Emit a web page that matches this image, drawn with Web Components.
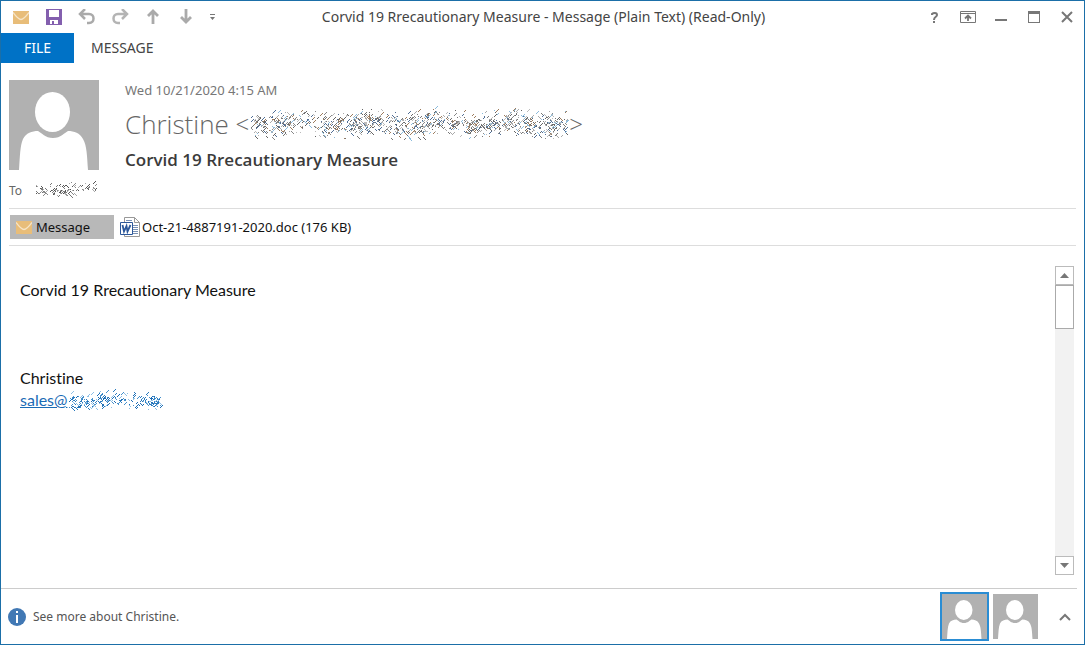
<!DOCTYPE html>
<html lang="en">
<head>
<meta charset="utf-8">
<title>Corvid 19 Rrecautionary Measure - Message</title>
<style>
html, body { margin: 0; background: #fff; }
body { font-family: "Noto Sans", "Open Sans", sans-serif; color: #444; }
</style>
</head>
<body>
<mail-window></mail-window>

<template id="t-window">
<style>
:host { display: flex; flex-direction: column; box-sizing: border-box; min-height: 100vh; border: 1px solid #1b6fa8; background: #fff; }
message-body { flex: 1; }
</style>
<title-bar>Corvid 19 Rrecautionary Measure - Message (Plain Text) (Read-Only)</title-bar>
<ribbon-tabs></ribbon-tabs>
<message-header></message-header>
<attachment-bar></attachment-bar>
<message-body></message-body>
<people-pane></people-pane>
</template>

<template id="t-title">
<style>
:host { display: flex; align-items: center; justify-content: space-between; height: 32px; }
.group { display: flex; flex: 1; align-items: center; }
.quick { padding-left: 3px; }
.controls { justify-content: flex-end; padding-right: 1px; }
button { display: flex; align-items: center; justify-content: center; width: 33px; height: 32px; padding: 0; border: 0; background: none; }
.more { width: 20px; }
.title { font-size: 14px; line-height: 20px; white-space: nowrap; }
svg { display: block; }
</style>
<div class="group quick">
<button aria-label="Message"><envelope-icon></envelope-icon></button>
<button aria-label="Save"><svg width="16" height="16" viewBox="0 0 16 16"><path fill="#835fae" d="M0 0h16v16H0z"/><path fill="#fff" d="M3 1h10v7H3zM4 11h8v4H8v-3H6v3H4z"/></svg></button>
<button aria-label="Undo"><svg width="18" height="16" viewBox="0 0 18 16" fill="none" stroke="#aaa" stroke-width="2.5"><path d="M2 5h9c6 0 6 9 0 9H9M7 0 2 5l5 5"/></svg></button>
<button aria-label="Redo"><svg width="18" height="16" viewBox="0 0 18 16" fill="none" stroke="#b4b4b4" stroke-width="2.5"><path d="M16 5H7c-6 0-6 9 0 9h2M11 0l5 5-5 5"/></svg></button>
<button aria-label="Previous item"><svg width="14" height="16" viewBox="0 0 14 16" fill="none" stroke="#aaa" stroke-width="2.8"><path d="M7 15V2M2 7l5-5 5 5"/></svg></button>
<button aria-label="Next item"><svg width="14" height="16" viewBox="0 0 14 16" fill="none" stroke="#aaa" stroke-width="2.8"><path d="M7 0v13M2 8l5 5 5-5"/></svg></button>
<button class="more" aria-label="Customize toolbar"><svg width="5" height="6" viewBox="0 0 5 6" fill="#777"><path d="M0 0h5v1H0zM0 3h5L2.500 6z"/></svg></button>
</div>
<span class="title"><slot></slot></span>
<div class="group controls">
<button aria-label="Help"><svg width="8" height="11" viewBox="0 0 8 11" fill="none" stroke="#777" stroke-width="2"><path d="M1 3V2c1-1 5-2 5 1 0 2-3 1.500-3 5M3 9v2"/></svg></button>
<button aria-label="Ribbon display options"><svg width="16" height="12" viewBox="0 0 16 12" fill="none" stroke="#777"><path d="M.5.5h15v11H.5zM0 2.500h16"/><path d="M8 10V5M5 7.500l3-3 3 3" stroke-width="1.800"/></svg></button>
<button aria-label="Minimize"><svg width="12" height="12" viewBox="0 0 12 12"><path fill="#777" d="M0 8h12v2H0z"/></svg></button>
<button aria-label="Maximize"><svg width="12" height="12" viewBox="0 0 12 12"><path fill="#777" fill-rule="evenodd" d="M0 0h12v12H0zM1 3v8h10V3z"/></svg></button>
<button aria-label="Close"><svg width="12" height="12" viewBox="0 0 12 12"><path d="m1 1 10 10M11 1 1 11" stroke="#777" stroke-width="2"/></svg></button>
</div>
</template>

<template id="t-tabs">
<style>
:host { display: flex; height: 30px; font-size: 14px; line-height: 30px; }
button { font: inherit; padding: 0 17px; border: 0; background: none; color: #444; }
.file { width: 73px; background: #0072c6; color: #fff; }
</style>
<button class="file">FILE</button><button>MESSAGE</button>
</template>

<template id="t-header">
<style>
:host { display: block; margin: 0 8px; padding: 17px 0 8px; border-bottom: 1px solid #ddd; }
.top { display: flex; gap: 26px; }
.date { font-size: 13px; line-height: 20px; color: #777; }
.from { display: flex; align-items: center; font-family: "Open Sans", sans-serif; font-size: 26px; line-height: 40px; height: 48px; font-weight: 300; color: #666; white-space: pre; }
.from span { font-size: 24px; }
h1 { margin: 0; font-family: "Open Sans", sans-serif; font-size: 17px; line-height: 24px; font-weight: 600; color: #3b3b3b; }
.to { display: flex; align-items: center; gap: 12px; height: 20px; margin-top: 8px; font-size: 12px; color: #666; }
</style>
<div class="top">
<person-photo size="90"></person-photo>
<div>
<div class="date">Wed 10/21/2020 4:15 AM</div>
<div class="from">Christine <span>&lt;</span><ink-scribble width="320" height="36" seed="7" tone="mixed"></ink-scribble><span>&gt;</span></div>
<h1>Corvid 19 Rrecautionary Measure</h1>
</div>
</div>
<div class="to">To <ink-scribble width="64" height="18" seed="3" tone="grey"></ink-scribble></div>
</template>

<template id="t-attach">
<style>
:host { display: flex; align-items: center; gap: 6px; height: 36px; margin: 0 8px; padding-left: 1px; border-bottom: 1px solid #ddd; }
button { display: flex; align-items: center; gap: 4px; height: 24px; padding: 0; border: 0; background: none; font: inherit; font-size: 13px; color: #111; }
.selected { width: 104px; padding-left: 6px; background: #b8b8b8; }
.file { gap: 2px; }
</style>
<button class="selected"><envelope-icon></envelope-icon>Message</button>
<button class="file"><svg width="20" height="20" viewBox="0 0 20 20"><path d="M4.500.5h10l5 5v14h-15z" fill="#fff" stroke="#999"/><path d="M14.500.5v5h5" fill="none" stroke="#999"/><path d="M13 8.500h5M13 10.500h5M13 12.500h5M13 14.500h5M13 16.500h5M6 3.500h6" stroke="#7891b5"/><path d="M.5 5.500h12v12H.5z" fill="#fff" stroke="#2b579a"/><path d="m2.500 8 1.500 6.500L6.500 9l1 5.500L10.500 8" fill="none" stroke="#2b579a" stroke-width="1.800"/></svg>Oct-21-4887191-2020.doc (176 KB)</button>
</template>

<template id="t-body">
<style>
:host { display: flex; justify-content: space-between; padding: 20px 10px 13px 19px; font-family: Lato, "Open Sans", sans-serif; font-variant-ligatures: none; font-size: 16px; line-height: 22px; color: #111; }
article { padding-top: 13px; }
p { margin: 0; min-height: 22px; }
a { color: #1a6bb5; }
.mail { display: flex; }
</style>
<article>
<p>Corvid 19 Rrecautionary Measure</p><p></p><p></p><p></p>
<p>Christine</p>
<p class="mail"><a href="mailto:sales">sales@</a><ink-scribble width="96" height="24" seed="11" tone="blue"></ink-scribble></p>
</article>
<scroll-track></scroll-track>
</template>

<template id="t-scroll">
<style>
:host { display: flex; flex-direction: column; width: 19px; background: #f2f2f2; }
button { display: flex; align-items: center; justify-content: center; box-sizing: border-box; width: 19px; height: 19px; padding: 0; border: 1px solid #bbb; background: #fff; }
.thumb { box-sizing: border-box; height: 44px; border: 1px solid #aaa; background: #fff; }
.space { flex: 1; }
</style>
<button aria-label="Scroll up"><svg width="9" height="5" viewBox="0 0 9 5"><path fill="#777" d="M0 5 4.500 0 9 5z"/></svg></button>
<div class="thumb"></div>
<div class="space"></div>
<button aria-label="Scroll down"><svg width="9" height="5" viewBox="0 0 9 5"><path fill="#777" d="m0 0 4.500 5L9 0z"/></svg></button>
</template>

<template id="t-people">
<style>
:host { display: flex; align-items: center; height: 55px; margin-right: 7px; padding-left: 7px; border-top: 1px solid #ccc; font-size: 12px; color: #555; }
.info { flex: none; margin-right: 7px; }
.text { flex: 1; }
.person { display: block; padding: 0; border: 0; background: none; margin-left: 4px; }
.active { border: 2px solid #2a8dd4; }
.collapse { display: flex; justify-content: center; width: 24px; margin-left: 15px; padding: 0; border: 0; background: none; }
</style>
<svg class="info" width="18" height="18" viewBox="0 0 18 18"><circle cx="9" cy="9" r="9" fill="#4178b4"/><path fill="#fff" d="M8 3h2v2H8zM8 7h2v8H8z"/></svg>
<span class="text">See more about Christine.</span>
<button class="person active" aria-label="Christine"><person-photo size="45"></person-photo></button>
<button class="person" aria-label="Recipient"><person-photo size="45"></person-photo></button>
<button class="collapse" aria-label="Expand"><svg width="12" height="8" viewBox="0 0 12 8"><path d="m1 7 5-5 5 5" fill="none" stroke="#777" stroke-width="2"/></svg></button>
</template>

<template id="t-envelope">
<style>:host { display: block; } svg { display: block; }</style>
<svg width="16" height="13" viewBox="0 0 16 13"><path fill="#e8bd79" d="M0 0h16v13H0z"/><path d="M0 1.500C4 7 6 8.500 8 8.500S12 7 16 1.500" fill="none" stroke="#f6e5c8" stroke-width="1.300"/></svg>
</template>

<script>
function define(name, id, setup) {
  customElements.define(name, class extends HTMLElement {
    connectedCallback() {
      if (this.shadowRoot) return;
      const root = this.attachShadow({ mode: 'open' });
      if (id) root.append(document.getElementById(id).content.cloneNode(true));
      if (setup) setup(this, root);
    }
  });
}

define('envelope-icon', 't-envelope');
define('person-photo', null, (el, root) => {
  const s = el.getAttribute('size');
  root.innerHTML = `<style>:host{display:block;flex:none}svg{display:block}</style>
  <svg width="${s}" height="${s}" viewBox="0 0 90 90"><path fill="#b1b1b1" d="M0 0h90v90H0z"/>
  <path fill="#fff" d="M10 90c1-14 1-24 4-31 3-6 9-8 15-8 4 2 7 7 15 7s11-5 15-7c6 0 12 2 15 8 4 7 4 17 5 31z"/>
  <ellipse cx="43.5" cy="32" rx="17.5" ry="20" fill="#fff"/></svg>`;
});

// Scrambled handwriting that hides an address: short seeded pen strokes.
define('ink-scribble', null, (el, root) => {
  const w = +el.getAttribute('width'), h = +el.getAttribute('height');
  const tones = {
    mixed: ['#666', '#888', '#777', '#aaa', '#bbb', '#4f6d94', '#9c7b5c', '#8bbbdc'],
    grey: ['#555', '#888', '#aaa', '#777'],
    blue: ['#1a6bb5', '#4590cc', '#2879bd', '#8fc0e5']
  }[el.getAttribute('tone')];
  let s = +el.getAttribute('seed');
  const rnd = () => (s = (s * 16807) % 2147483647) / 2147483647;
  for (let i = 0; i < 9; i++) rnd();
  let marks = '';
  const count = Math.round(w * h / 9);
  for (let i = 0; i < count; i++) {
    const x = 2 + Math.floor(rnd() * (w - 4));
    const mid = h / 2 + Math.sin(x / 11) * h * 0.06;
    const y = Math.round(mid + (rnd() + rnd() - 1) * h * 0.4);
    const len = 1 + Math.floor(rnd() * 3);
    const dir = rnd() < 0.6 ? -1 : 1;
    if (Math.sin(x / 5 + Math.sin(x / 17) * 3) < -0.7 && rnd() < 0.45) continue;
    marks += `<path d="M${x} ${y}l${len} ${dir * len}" stroke="${tones[Math.floor(rnd() * tones.length)]}"/>`;
  }
  root.innerHTML = `<style>:host{display:block;flex:none;white-space:normal}svg{display:block}</style>
  <svg width="${w}" height="${h}" viewBox="0 0 ${w} ${h}" shape-rendering="crispEdges" aria-hidden="true">${marks}</svg>`;
});

define('title-bar', 't-title');
define('ribbon-tabs', 't-tabs');
define('message-header', 't-header');
define('attachment-bar', 't-attach');
define('scroll-track', 't-scroll');
define('message-body', 't-body');
define('people-pane', 't-people');
define('mail-window', 't-window');
</script>
</body>
</html>
